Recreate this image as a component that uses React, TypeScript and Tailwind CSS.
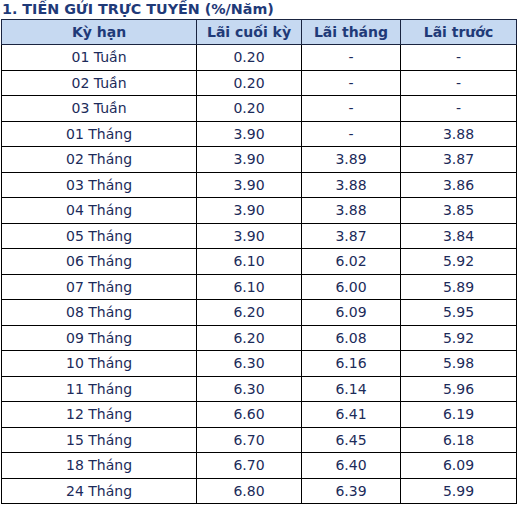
import React from 'react';

const rows: [string, string, string, string][] = [
  ['01 Tuần', '0.20', '-', '-'],
  ['02 Tuần', '0.20', '-', '-'],
  ['03 Tuần', '0.20', '-', '-'],
  ['01 Tháng', '3.90', '-', '3.88'],
  ['02 Tháng', '3.90', '3.89', '3.87'],
  ['03 Tháng', '3.90', '3.88', '3.86'],
  ['04 Tháng', '3.90', '3.88', '3.85'],
  ['05 Tháng', '3.90', '3.87', '3.84'],
  ['06 Tháng', '6.10', '6.02', '5.92'],
  ['07 Tháng', '6.10', '6.00', '5.89'],
  ['08 Tháng', '6.20', '6.09', '5.95'],
  ['09 Tháng', '6.20', '6.08', '5.92'],
  ['10 Tháng', '6.30', '6.16', '5.98'],
  ['11 Tháng', '6.30', '6.14', '5.96'],
  ['12 Tháng', '6.60', '6.41', '6.19'],
  ['15 Tháng', '6.70', '6.45', '6.18'],
  ['18 Tháng', '6.70', '6.40', '6.09'],
  ['24 Tháng', '6.80', '6.39', '5.99'],
];

export default function App() {
  return (
    <div className="w-[520px] h-[507px] bg-white overflow-hidden" style={{ fontFamily: '"DejaVu Sans", Verdana, sans-serif' }}>
      <div className="h-[19px] pl-[2px] text-[14.3px] leading-[19px] font-bold text-[#1f3a78]">
        1. TIỀN GỬI TRỰC TUYẾN (%/Năm)
      </div>
      <table className="ml-[1px] w-[515px] border-collapse table-fixed text-[14px] text-[#1c2b5a]">
        <colgroup>
          <col className="w-[195px]" />
          <col className="w-[105px]" />
          <col className="w-[99px]" />
          <col className="w-[116px]" />
        </colgroup>
        <thead>
          <tr className="h-[25px] bg-[#c6d9f1]">
            {['Kỳ hạn', 'Lãi cuối kỳ', 'Lãi tháng', 'Lãi trước'].map((h) => (
              <th key={h} className="border border-[#1a2440] p-0 text-center text-[14px] font-bold text-[#1f3a78]">
                {h}
              </th>
            ))}
          </tr>
        </thead>
        <tbody>
          {rows.map((r) => (
            <tr key={r[0]} className="h-[25.5px]">
              {r.map((c, i) => (
                <td key={i} className="border border-black p-0 text-center leading-none">
                  {c}
                </td>
              ))}
            </tr>
          ))}
        </tbody>
      </table>
    </div>
  );
}
